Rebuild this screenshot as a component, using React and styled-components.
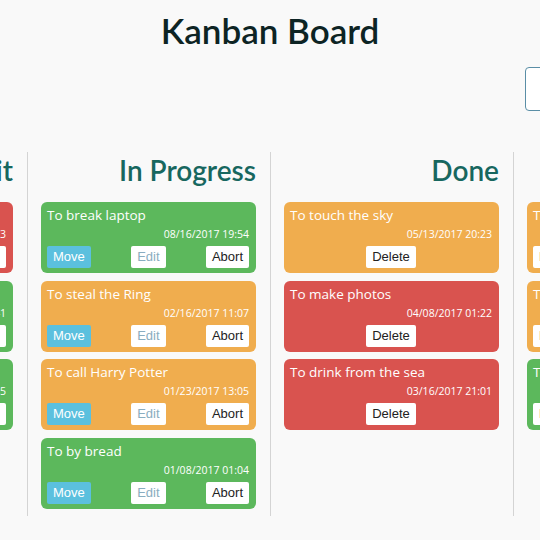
import styled, { createGlobalStyle } from "styled-components";

const GlobalStyle = createGlobalStyle`
  html, body {
    margin: 0;
    padding: 0;
    background: #f9f9f9;
    overflow: hidden;
  }
  body {
    font-family: "Open Sans", "Noto Sans", sans-serif;
  }
`;

const colors = {
  green: "#5cb85c",
  orange: "#f0ad4e",
  red: "#d9534f",
};

const columns = [
  {
    title: "Wait",
    tasks: [
      { text: "To learn to fly", date: "03/11/2017 10:23", color: "red" },
      { text: "To win the lottery", date: "02/07/2017 09:41", color: "green" },
      { text: "To read a book", date: "01/19/2017 16:15", color: "green" },
    ],
    actions: ["Start", "Edit", "Delete"],
  },
  {
    title: "In Progress",
    tasks: [
      { text: "To break laptop", date: "08/16/2017 19:54", color: "green" },
      { text: "To steal the Ring", date: "02/16/2017 11:07", color: "orange" },
      { text: "To call Harry Potter", date: "01/23/2017 13:05", color: "orange" },
      { text: "To by bread", date: "01/08/2017 01:04", color: "green" },
    ],
    actions: ["Move", "Edit", "Abort"],
  },
  {
    title: "Done",
    tasks: [
      { text: "To touch the sky", date: "05/13/2017 20:23", color: "orange" },
      { text: "To make photos", date: "04/08/2017 01:22", color: "red" },
      { text: "To drink from the sea", date: "03/16/2017 21:01", color: "red" },
    ],
    actions: ["Delete"],
  },
  {
    title: "Aborted",
    tasks: [
      { text: "To fix the car", date: "06/02/2017 12:10", color: "orange" },
      { text: "To go to Mars", date: "04/21/2017 08:30", color: "orange" },
      { text: "To run a marathon", date: "02/28/2017 18:45", color: "green" },
    ],
    actions: ["Restore", "Delete"],
  },
];

export default function App() {
  return (
    <>
      <GlobalStyle />
      <Page>
        <Title>Kanban Board</Title>
        <Toolbar>
          <ToolCell />
          <ToolCell />
          <ToolCell />
          <ToolCell>
            <AddButton>Add new task</AddButton>
          </ToolCell>
        </Toolbar>
        <Board>
          {columns.map((col) => (
            <Column key={col.title}>
              <ColumnTitle>{col.title}</ColumnTitle>
              {col.tasks.map((task) => (
                <Card key={task.text} $color={colors[task.color]}>
                  <CardText>{task.text}</CardText>
                  <CardDate>{task.date}</CardDate>
                  <Actions $single={col.actions.length === 1}>
                    {col.actions.map((a) => (
                      <ActionButton key={a} $kind={a}>
                        {a}
                      </ActionButton>
                    ))}
                  </Actions>
                </Card>
              ))}
            </Column>
          ))}
        </Board>
      </Page>
    </>
  );
}

const Page = styled.div`
  width: 540px;
  display: flex;
  flex-direction: column;
  align-items: center;
`;

const Title = styled.h1`
  margin: 8px 0 0;
  font-family: Lato, "Open Sans", sans-serif;
  font-size: 35px;
  line-height: 44px;
  font-weight: 600;
  color: #0d2424;
`;

const Toolbar = styled.div`
  width: 972px;
  flex-shrink: 0;
  display: grid;
  grid-template-columns: repeat(4, 243px);
  margin-top: 15px;
`;

const ToolCell = styled.div`
  padding-left: 12px;
`;

const AddButton = styled.button`
  height: 44px;
  padding: 0 20px;
  border: 1px solid #5a8ea6;
  border-radius: 4px;
  background: #fff;
  color: #31708f;
  font-family: "Liberation Sans", Arial, sans-serif;
  font-size: 15px;
`;

const Board = styled.div`
  width: 972px;
  flex-shrink: 0;
  display: flex;
  margin-top: 41px;
`;

const Column = styled.div`
  width: 243px;
  box-sizing: border-box;
  border-left: 1px solid #d4d4d4;
  padding: 0 14px 7px 13px;
  display: flex;
  flex-direction: column;
  gap: 7.5px;
`;

const ColumnTitle = styled.h2`
  margin: 0;
  height: 42.5px;
  text-align: right;
  font-family: Lato, "Open Sans", sans-serif;
  font-size: 28px;
  line-height: 36px;
  font-weight: 600;
  color: #17675f;
`;

const Card = styled.div`
  height: 71px;
  box-sizing: border-box;
  border-radius: 6px;
  background: ${(p) => p.$color};
  padding: 4px 7px 3px 6px;
  color: #fff;
  display: flex;
  flex-direction: column;
`;

const CardText = styled.div`
  font-size: 13.5px;
  line-height: 19px;
`;

const CardDate = styled.div`
  font-size: 10.5px;
  line-height: 19px;
  text-align: right;
`;

const Actions = styled.div`
  display: flex;
  justify-content: ${(p) => (p.$single ? "center" : "space-between")};
  margin-top: 2px;
`;

const buttonColors = {
  Move: { bg: "#5bc0de", fg: "#fff" },
  Edit: { bg: "#fff", fg: "#89adc0" },
};

const ActionButton = styled.button`
  height: 22px;
  padding: 0 6px;
  border: none;
  border-radius: 2px;
  background: ${(p) => (buttonColors[p.$kind] || { bg: "#fff" }).bg};
  color: ${(p) => (buttonColors[p.$kind] || { fg: "#222" }).fg};
  font-family: "Liberation Sans", Arial, sans-serif;
  font-size: 13px;
  line-height: 22px;
`;
